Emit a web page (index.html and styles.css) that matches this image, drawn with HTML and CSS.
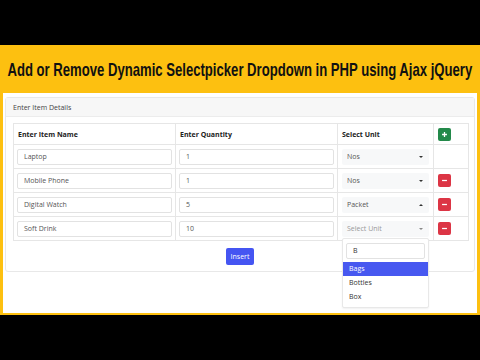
FILE: index.html
```html
<!DOCTYPE html>
<html>
<head>
<meta charset="utf-8">
<link rel="stylesheet" href="styles.css">
</head>
<body>
<div class="topbar"></div>
<div class="frame">
  <div class="title"><span class="title-text">Add or Remove Dynamic Selectpicker Dropdown in PHP using Ajax jQuery</span></div>
  <div class="panel">
    <div class="card">
      <div class="card-header">Enter Item Details</div>
      <div class="card-body">
        <table class="items">
          <thead>
            <tr>
              <th class="c1">Enter Item Name</th>
              <th class="c2">Enter Quantity</th>
              <th class="c3">Select Unit</th>
              <th class="c4"><span class="btn-sq btn-add"><svg viewBox="0 0 10 10" width="7" height="7"><path d="M5 1.5v7M1.5 5h7" stroke="#fff" stroke-width="1.8"/></svg></span></th>
            </tr>
          </thead>
          <tbody>
            <tr>
              <td><div class="inp">Laptop</div></td>
              <td><div class="inp">1</div></td>
              <td><div class="sel"><span>Nos</span><span class="caret down"></span></div></td>
              <td></td>
            </tr>
            <tr>
              <td><div class="inp">Mobile Phone</div></td>
              <td><div class="inp">1</div></td>
              <td><div class="sel"><span>Nos</span><span class="caret down"></span></div></td>
              <td><span class="btn-sq btn-rem"><svg viewBox="0 0 10 10" width="7" height="7"><path d="M1.5 5h7" stroke="#fff" stroke-width="1.8"/></svg></span></td>
            </tr>
            <tr>
              <td><div class="inp">Digital Watch</div></td>
              <td><div class="inp">5</div></td>
              <td><div class="sel"><span>Packet</span><span class="caret up"></span></div></td>
              <td><span class="btn-sq btn-rem"><svg viewBox="0 0 10 10" width="7" height="7"><path d="M1.5 5h7" stroke="#fff" stroke-width="1.8"/></svg></span></td>
            </tr>
            <tr>
              <td><div class="inp">Soft Drink</div></td>
              <td><div class="inp">10</div></td>
              <td class="has-menu">
                <div class="sel open"><span class="ph">Select Unit</span><span class="caret down"></span></div>
                <div class="menu">
                  <div class="search">B</div>
                  <div class="opt active">Bags</div>
                  <div class="opt">Bottles</div>
                  <div class="opt">Box</div>
                </div>
              </td>
              <td><span class="btn-sq btn-rem"><svg viewBox="0 0 10 10" width="7" height="7"><path d="M1.5 5h7" stroke="#fff" stroke-width="1.8"/></svg></span></td>
            </tr>
          </tbody>
        </table>
        <div class="actions"><span class="btn-insert">Insert</span></div>
      </div>
    </div>
  </div>
</div>
<div class="bottombar"></div>
</body>
</html>
```
FILE: styles.css
```css
* { box-sizing: border-box; }
html, body { margin: 0; padding: 0; }
body {
  width: 480px;
  height: 360px;
  background: #000;
  overflow: hidden;
  font-family: "Open Sans", "Noto Sans", sans-serif;
}
.topbar { height: 45px; background: #000; }
.frame {
  background: #fdc010;
  padding: 0 3px 2px 3px;
}
.title {
  height: 48px;
  display: flex;
  align-items: center;
  justify-content: center;
  white-space: nowrap;
  overflow: hidden;
}
.title-text {
  font-family: "Liberation Sans", Arial, sans-serif;
  font-weight: bold;
  font-size: 19px;
  color: #111;
  display: inline-block;
  flex: none;
  transform: scaleX(0.69);
  margin: 2px -200px 0 -200px;
}
.panel {
  background: #fff;
  height: 220px;
  padding: 4px 2px 0 2px;
}
.card {
  border: 1px solid #e8e8e8;
  border-radius: 3px;
  height: 175px;
}
.card-header {
  height: 19px;
  background: #f7f7f7;
  border-bottom: 1px solid #ececec;
  font-size: 7px;
  color: #444;
  padding: 0 7px;
  line-height: 19px;
}
.card-body {
  padding: 6px 7px 0 7px;
}
.items {
  border-collapse: collapse;
  width: 455px;
  table-layout: fixed;
}
.items th, .items td {
  border: 1px solid #e6e6e6;
  padding: 0 3px;
  vertical-align: middle;
}
.items th {
  height: 21px;
  text-align: left;
  font-size: 7px;
  font-weight: bold;
  color: #222;
}
.items td { height: 24px; }
.c1 { width: 162px; }
.c2 { width: 162px; }
.c3 { width: 96px; }
.c4 { width: 35px; }
.items th.c1, .items th.c2, .items th.c3 { padding-left: 4px; }
.inp {
  height: 16px;
  border: 1px solid #e2e2e2;
  border-radius: 2px;
  font-size: 7px;
  color: #555;
  line-height: 14px;
  padding-left: 6px;
}
.sel {
  height: 16px;
  width: 87px;
  margin-left: 1px;
  background: #f7f8f9;
  border-radius: 2px;
  font-size: 7px;
  color: #555;
  line-height: 16px;
  padding: 0 6px 0 5px;
  display: flex;
  justify-content: space-between;
  align-items: center;
}
.sel .ph { color: #999; }
.caret {
  width: 0; height: 0;
  border-left: 2px solid transparent;
  border-right: 2px solid transparent;
}
.caret.down { border-top: 2px solid #333; }
.caret.up { border-bottom: 2px solid #333; }
.sel.open .caret.down { border-top-color: #888; }
.btn-sq {
  display: flex;
  align-items: center;
  justify-content: center;
  width: 13px;
  height: 13px;
  border-radius: 2px;
  margin-left: 1px;
}
.btn-add { background: #23894a; }
.btn-rem { background: #dc3545; }
.has-menu { position: relative; }
.menu {
  position: absolute;
  left: 4px;
  top: 21px;
  width: 87px;
  background: #fff;
  border: 1px solid #e8e8e8;
  border-radius: 2px;
  padding: 4px 0 3px 0;
  z-index: 2;
  box-shadow: 0 1px 2px rgba(0,0,0,0.06);
}
.search {
  margin: 0 3px 3px 3px;
  height: 16px;
  border: 1px solid #e2e2e2;
  border-radius: 2px;
  font-size: 7px;
  color: #333;
  line-height: 14px;
  padding-left: 6px;
}
.opt {
  height: 14px;
  line-height: 14px;
  font-size: 7px;
  color: #333;
  padding-left: 6px;
}
.opt.active { background: #4758f0; color: #fff; }
.actions {
  display: flex;
  justify-content: center;
  padding-top: 7px;
}
.btn-insert {
  display: inline-block;
  width: 28px;
  height: 17px;
  line-height: 17px;
  text-align: center;
  background: #4555f2;
  color: #fff;
  font-size: 7px;
  border-radius: 2px;
}
.bottombar { height: 45px; background: #000; }
```
